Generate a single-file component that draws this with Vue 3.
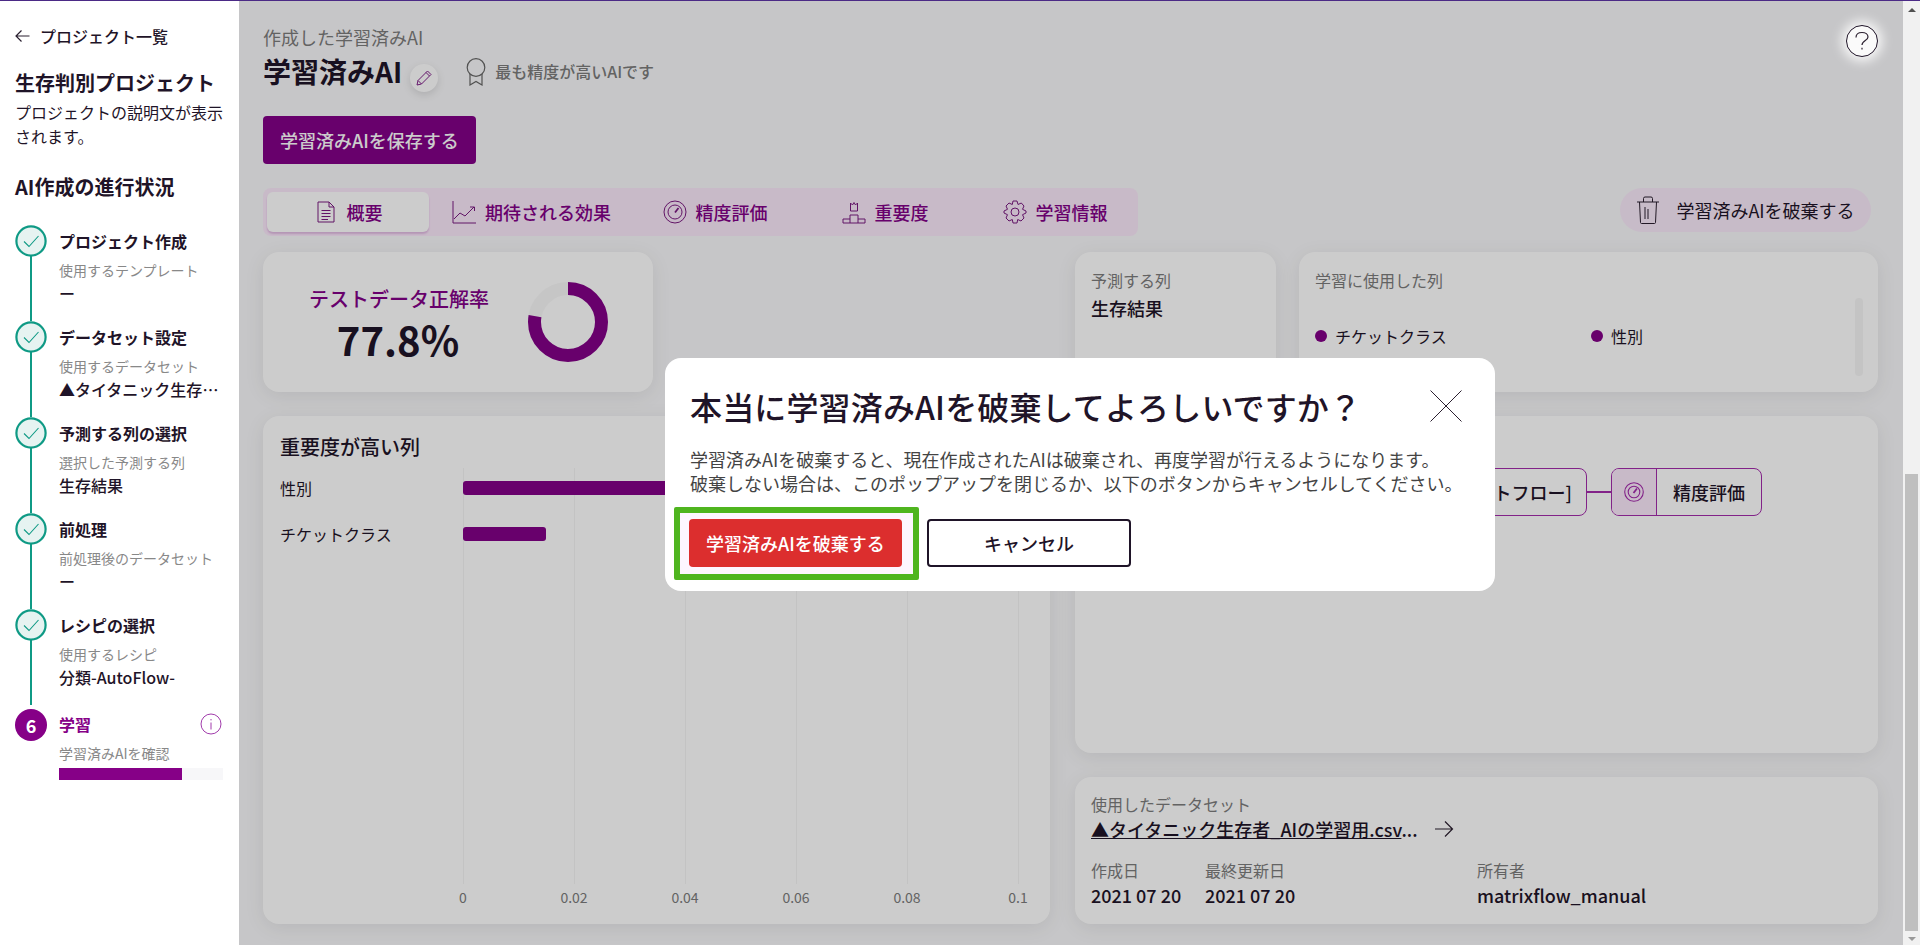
<template>
  <div class="page">
    <div class="top-line"></div>
    <div class="shell">
      <!-- Sidebar -->
      <aside class="sidebar">
        <div class="back">
          <svg class="back-icon" width="15" height="14" viewBox="0 0 15 14" fill="none" stroke="#2a2030" stroke-width="1.2">
            <path d="M14.500 7H1M6.500 1.500 1 7 6.500 12.500" />
          </svg>
          <span>プロジェクト一覧</span>
        </div>
        <h1 class="project-name">生存判別プロジェクト</h1>
        <p class="project-desc">プロジェクトの説明文が表示されます。</p>
        <h2 class="progress-title">AI作成の進行状況</h2>

        <ol class="steps">
          <li v-for="step in steps" :key="step.title" class="step">
            <div class="step-mark">
              <svg width="32" height="32" viewBox="0 0 32 32" fill="none">
                <circle cx="16" cy="16" r="14.6" fill="#e6f3f1" stroke="#0f9a85" stroke-width="2.2" />
                <path d="M9 16.5 14 21.5 23.5 11" stroke="#0f9a85" stroke-width="1.1" />
              </svg>
              <i class="step-line"></i>
            </div>
            <div class="step-body">
              <div class="step-title">{{ step.title }}</div>
              <div class="step-sub">{{ step.sub }}</div>
              <div class="step-value">{{ step.value }}</div>
            </div>
          </li>
          <li class="step step-current">
            <div class="step-mark"><span class="step-num">6</span></div>
            <div class="step-body">
              <div class="current-head">
                <div class="step-title current-title">学習</div>
                <svg width="22" height="22" viewBox="0 0 22 22" fill="none" stroke="#a13bab" stroke-width="1">
                  <circle cx="11" cy="11" r="10" />
                  <path d="M11 9.5V16.5M11 6v1.4" />
                </svg>
              </div>
              <div class="step-sub current-sub">学習済みAIを確認</div>
              <div class="learn-track"><div class="learn-bar" :style="{ width: '75%' }"></div></div>
            </div>
          </li>
        </ol>
      </aside>

      <!-- Main -->
      <main class="main">
        <div class="head-label">作成した学習済みAI</div>
        <div class="head-row">
          <span class="head-title">学習済みAI</span>
          <span class="edit-btn">
            <svg width="18" height="18" viewBox="0 0 18 18" fill="none" stroke="#82208a" stroke-width="1">
              <path d="M2 16 3 11.500 12.500 2 16 5.500 6.500 15ZM3 11.500 6.500 15M11 3.500 14.500 7" />
            </svg>
          </span>
          <svg class="award" width="20" height="28" viewBox="0 0 20 28" fill="none" stroke="#666" stroke-width="1.2">
            <circle cx="10" cy="9.500" r="8.800" />
            <path d="M4 16V27L10 23.500 16 27V16" />
          </svg>
          <span class="head-note">最も精度が高いAIです</span>
        </div>
        <button class="save-btn">学習済みAIを保存する</button>

        <div class="toolbar">
          <div class="tabs">
            <div v-for="tab in tabs" :key="tab.label" class="tab" :class="{ active: tab.active }">
              <svg width="24" height="24" viewBox="0 0 24 24" fill="none" stroke="#7a1a80" stroke-width="1" v-html="tab.icon"></svg>
              <span>{{ tab.label }}</span>
            </div>
          </div>
          <div class="discard-pill">
            <svg width="24" height="28" viewBox="0 0 24 28" fill="none" stroke="#2b2030" stroke-width="1">
              <path d="M1 6H23M3.500 6 4.500 26.500Q4.600 27.500 5.500 27.500H18.500Q19.400 27.500 19.500 26.500L20.500 6M7.500 6V2.500Q7.500 1 9 1H15Q16.500 1 16.500 2.500V6M9 11V23M12 13V23" />
            </svg>
            <span>学習済みAIを破棄する</span>
          </div>
        </div>

        <div class="content">
          <!-- left column -->
          <div class="col-left">
            <section class="card score-card">
              <div class="score-text">
                <div class="score-label">テストデータ正解率</div>
                <div class="score-value">77.8%</div>
              </div>
              <svg width="80" height="80" viewBox="0 0 80 80" fill="none">
                <circle cx="40" cy="40" r="33.500" stroke="#f8f8f8" stroke-width="13" />
                <circle cx="40" cy="40" r="33.500" stroke="#820087" stroke-width="13" pathLength="100" stroke-dasharray="77.8 22.200" transform="rotate(-90 40 40)" />
              </svg>
            </section>
            <section class="card chart-card">
              <h3 class="chart-title">重要度が高い列</h3>
              <div class="chart">
                <div class="chart-labels">
                  <div v-for="row in importance" :key="row.name" class="chart-label">{{ row.name }}</div>
                </div>
                <div class="plot">
                  <i v-for="(t, i) in ticks" :key="t" class="grid-line" :style="{ left: i * 20 + '%' }"></i>
                  <span v-for="(t, i) in ticks" :key="'l' + t" class="tick" :style="{ left: i * 20 + '%' }">{{ t }}</span>
                  <div class="bars">
                    <div v-for="row in importance" :key="row.name" class="bar" :style="{ width: row.value * 1000 + '%' }"></div>
                  </div>
                </div>
              </div>
            </section>
          </div>

          <!-- right column -->
          <div class="col-right">
            <div class="info-row">
              <section class="card target-card">
                <div class="muted">予測する列</div>
                <div class="strong target-val">生存結果</div>
              </section>
              <section class="card used-card">
                <div class="muted">学習に使用した列</div>
                <div class="used-list">
                  <span class="used-item"><i class="dot"></i>チケットクラス</span>
                  <span class="used-item"><i class="dot"></i>性別</span>
                </div>
                <i class="card-scroll"></i>
              </section>
            </div>
            <section class="card flow-card">
              <div class="flow">
                <div class="flow-box flow-recipe">分類-AutoFlow-[オートフロー]</div>
                <i class="flow-link"></i>
                <div class="flow-box flow-eval">
                  <span class="flow-icon">
                    <svg width="20" height="20" viewBox="0 0 20 20" fill="none" stroke="#a32bab" stroke-width="1.100">
                      <circle cx="10" cy="10" r="9.300" />
                      <circle cx="10" cy="10" r="5.800" />
                      <path d="M9.500 11 13 6.500" stroke-width="1.800" />
                    </svg>
                  </span>
                  <span class="flow-text">精度評価</span>
                </div>
              </div>
            </section>
            <section class="card dataset-card">
              <div class="muted">使用したデータセット</div>
              <div class="dataset-link">
                <span><span class="link-text">▲タイタニック生存者_AIの学習用.csv</span>...</span>
                <svg width="20" height="18" viewBox="0 0 20 18" fill="none" stroke="#2b2030" stroke-width="1.200">
                  <path d="M1 9H18M11 1.500 18.500 9 11 16.500" />
                </svg>
              </div>
              <div class="meta">
                <div class="meta-col meta-date">
                  <div class="muted">作成日</div>
                  <div class="strong">2021 07 20</div>
                </div>
                <div class="meta-col meta-update">
                  <div class="muted">最終更新日</div>
                  <div class="strong">2021 07 20</div>
                </div>
                <div class="meta-col">
                  <div class="muted">所有者</div>
                  <div class="strong">matrixflow_manual</div>
                </div>
              </div>
            </section>
          </div>
        </div>

        <!-- Dim layer + dialog -->
        <div class="overlay">
          <div class="dialog" role="dialog">
            <div class="dialog-head">
              <h2 class="dialog-title">本当に学習済みAIを破棄してよろしいですか？</h2>
              <svg class="dialog-close" width="34" height="34" viewBox="0 0 34 34" fill="none" stroke="#2b2030" stroke-width="1">
                <path d="M1.500 1.500 32.500 32.500M32.500 1.500 1.500 32.500" />
              </svg>
            </div>
            <p class="dialog-text">学習済みAIを破棄すると、現在作成されたAIは破棄され、再度学習が行えるようになります。<br />破棄しない場合は、このポップアップを閉じるか、以下のボタンからキャンセルしてください。</p>
            <div class="dialog-actions">
              <div class="danger-wrap">
                <i class="annotation"></i>
                <button class="danger-btn">学習済みAIを破棄する</button>
              </div>
              <button class="cancel-btn">キャンセル</button>
            </div>
          </div>
        </div>

        <div class="help-btn">
          <svg width="16" height="20" viewBox="0 0 16 20" fill="none" stroke="#2b2030" stroke-width="1.200">
            <path d="M2 6.500C2 3.300 4.500 1.500 8 1.500S14 3.500 14 6C14 9.500 8 9.500 8 14" />
            <path d="M8 16.800V18.500" />
          </svg>
        </div>
      </main>

      <!-- Window scrollbar -->
      <div class="scrollbar">
        <span class="arrow-up"></span>
        <div class="scroll-space"><div class="scroll-thumb"></div></div>
        <span class="arrow-down"></span>
      </div>
    </div>
  </div>
</template>

<script setup>
const steps = [
  { title: 'プロジェクト作成', sub: '使用するテンプレート', value: 'ー' },
  { title: 'データセット設定', sub: '使用するデータセット', value: '▲タイタニック生存者_AIの学習用.csv' },
  { title: '予測する列の選択', sub: '選択した予測する列', value: '生存結果' },
  { title: '前処理', sub: '前処理後のデータセット', value: 'ー' },
  { title: 'レシピの選択', sub: '使用するレシピ', value: '分類-AutoFlow-' }
]

const tabs = [
  {
    label: '概要',
    active: true,
    icon: '<path d="M4 2H15L20 7V22H4ZM15 2V7H20M7.500 10.500H16.500M7.500 13.500H16.500M7.500 16.500H16.500M7.500 19.500H14" />'
  },
  {
    label: '期待される効果',
    icon: '<path d="M1 1V23H24M2 19 8 13 13 16 22 7M18 7H22.500V11" />'
  },
  {
    label: '精度評価',
    icon: '<circle cx="12" cy="12" r="11" /><circle cx="12" cy="12" r="7" /><path d="M12 12.500 15.500 8" stroke-width="1.800" />'
  },
  {
    label: '重要度',
    icon: '<path d="M1 23V19H8V15H16V19H23V23ZM8 19V23M16 19V23M8.500 11V3L10.500 5 12 2.500 13.500 5 15.500 3V11Z" />'
  },
  {
    label: '学習情報',
    icon: '<circle cx="12" cy="12" r="4" /><path d="M10 1H14L15 4.500 18.300 3 21 6 19.500 9.300 23 11V13L19.500 14.700 21 18 18 21 14.700 19.500 14 23H10L9.300 19.500 6 21 3 18 4.500 14.700 1 13V11L4.500 9.300 3 6 6 3 9.300 4.500Z" stroke-linejoin="round" />'
  }
]

const importance = [
  { name: '性別', value: 0.0776 },
  { name: 'チケットクラス', value: 0.015 }
]

const ticks = ['0', '0.02', '0.04', '0.06', '0.08', '0.1']
</script>

<style scoped>
.page { width: 1920px; height: 945px; overflow: hidden; background: #fff; color: #1f1428; font-family: "Noto Sans CJK JP", "Noto Sans", sans-serif; }
.top-line { height: 1px; background: #4b2a86; }
.shell { display: flex; height: 944px; }

/* Sidebar */
.sidebar { width: 239px; flex-shrink: 0; padding: 23px 14px 0 15px; box-sizing: border-box; background: #fff; }
.back { display: flex; align-items: center; gap: 10px; font-size: 16px; line-height: 24px; height: 24px; font-weight: 500; }
.back-icon { flex-shrink: 0; }
.project-name { margin: 20px 0 0; font-size: 20px; line-height: 30px; font-weight: 700; white-space: nowrap; }
.project-desc { margin: 2px 0 0; font-size: 16px; line-height: 24px; }
.progress-title { margin: 24px 0 0; font-size: 20px; line-height: 30px; font-weight: 700; }

.steps { list-style: none; margin: 23px 2px 0 0; padding: 0; }
.step { display: flex; gap: 12px; height: 96px; }
.step-mark { width: 32px; flex-shrink: 0; display: flex; flex-direction: column; align-items: center; }
.step-mark svg { flex-shrink: 0; display: block; }
.step-line { width: 2.500px; flex: 1; background: #0f9a85; margin-top: -1px; }
.step-body { flex: 1; min-width: 0; }
.step-title { font-size: 16px; line-height: 24px; margin-top: 4px; font-weight: 700; }
.step-sub { font-size: 14px; line-height: 20px; margin-top: 7px; color: #888; }
.step-value { font-size: 16px; line-height: 24px; margin-top: 1px; font-weight: 500; white-space: nowrap; overflow: hidden; text-overflow: ellipsis; }

.step-current { margin-top: 4px; }
.step-num { width: 32px; height: 32px; border-radius: 50%; background: #860087; color: #fff; font-size: 18px; font-weight: 700; display: flex; align-items: center; justify-content: center; }
.current-head { display: flex; align-items: center; justify-content: space-between; margin-top: 3px; padding-right: 1px; }
.current-title { color: #860087; margin-top: 0; }
.current-sub { margin-top: 7px; }
.learn-track { height: 12px; margin-top: 5px; background: #f7f7f9; }
.learn-bar { height: 100%; background: #860087; }

/* Main */
.main { position: relative; flex: 1; min-width: 0; padding: 23px 25px 0 24px; box-sizing: border-box; background: #f8f8fa; }
.head-label { font-size: 18px; line-height: 26px; color: #7c7c7c; }
.head-row { display: flex; align-items: center; height: 42px; }
.head-title { font-size: 28px; font-weight: 700; line-height: 42px; }
.edit-btn { width: 28px; height: 28px; margin: 13px 0 0 8px; border-radius: 50%; background: #fff; box-shadow: 0 3px 8px rgba(0, 0, 0, 0.12); display: flex; align-items: center; justify-content: center; }
.award { margin: 2px 0 0 28px; }
.head-note { margin-left: 9px; font-size: 16px; color: #7c7c7c; font-weight: 500; }
.save-btn { display: block; width: 213px; height: 48px; margin-top: 24px; padding: 0; border: 0; border-radius: 4px; background: #820087; color: #fff; font-family: inherit; font-size: 18px; font-weight: 500; }

.toolbar { display: flex; align-items: flex-start; justify-content: space-between; margin-top: 24px; padding-right: 7px; }
.tabs { display: flex; gap: 8px; height: 48px; padding: 4px 2px 4px 4px; box-sizing: border-box; border-radius: 8px; background: #fbe9fb; }
.tab { min-width: 162px; padding: 0 15px; box-sizing: border-box; display: flex; align-items: center; justify-content: center; gap: 9px; border-radius: 6px; color: #820087; font-size: 18px; font-weight: 500; }
.tab.active { background: #fff; box-shadow: 0 2px 2px rgba(130, 0, 135, 0.2); }
.discard-pill { width: 251px; height: 44px; border-radius: 22px; display: flex; align-items: center; justify-content: center; gap: 16px; background: #f9eafa; font-size: 18px; }

.content { display: flex; gap: 25px; margin-top: 16px; }
.col-left { width: 787px; flex-shrink: 0; display: flex; flex-direction: column; gap: 24px; }
.col-right { flex: 1; min-width: 0; display: flex; flex-direction: column; gap: 24px; }
.card { position: relative; background: #fff; border-radius: 16px; box-shadow: 0 4px 20px rgba(0, 0, 0, 0.08); box-sizing: border-box; }

.score-card { width: 390px; height: 140px; display: flex; align-items: center; padding-left: 46px; gap: 41px; }
.score-text { text-align: center; width: 178px; flex-shrink: 0; margin-top: 4px; white-space: nowrap; }
.score-label { color: #820087; font-size: 20px; line-height: 30px; font-weight: 500; }
.score-value { font-size: 40px; line-height: 50px; font-weight: 700; }

.chart-card { height: 508px; padding: 16px 17px; }
.chart-title { margin: 0; font-size: 20px; line-height: 30px; font-weight: 500; }
.chart { display: flex; margin-top: 6px; height: 416px; }
.chart-labels { width: 183px; flex-shrink: 0; padding-top: 8px; }
.chart-label { font-size: 16px; line-height: 24px; height: 46px; }
.plot { position: relative; width: 555px; height: 416px; }
.grid-line { position: absolute; top: 0; bottom: 0; width: 1px; background: #f4f4f4; }
.tick { position: absolute; top: 419px; transform: translateX(-50%); font-size: 14px; line-height: 20px; color: #7c7c7c; }
.bars { position: absolute; inset: 13px 0 0 0; }
.bar { height: 14px; margin-bottom: 32px; background: #820087; border-radius: 3px; }

.info-row { display: flex; gap: 23px; }
.target-card { width: 201px; height: 140px; padding: 16px; }
.used-card { flex: 1; height: 140px; padding: 16px 16px; }
.muted { color: #7c7c7c; font-size: 16px; line-height: 24px; }
.strong { font-size: 18px; line-height: 26px; font-weight: 500; }
.target-val { margin-top: 3px; }
.used-list { display: grid; grid-template-columns: 276px 1fr; margin-top: 32px; }
.used-item { display: flex; align-items: center; gap: 8px; font-size: 16px; line-height: 24px; }
.dot { width: 12px; height: 12px; border-radius: 50%; background: #820087; flex-shrink: 0; }
.card-scroll { position: absolute; right: 15px; top: 46px; width: 8px; height: 78px; border-radius: 4px; background: #f6f6f6; }

.flow-card { height: 337px; padding: 52px 0 0 0; }
.flow { display: flex; align-items: center; padding-left: 246px; }
.flow-box { height: 48px; box-sizing: border-box; border: 1.500px solid #a32bab; border-radius: 8px; display: flex; align-items: center; font-size: 18px; font-weight: 500; overflow: hidden; }
.flow-recipe { width: 266px; justify-content: flex-end; padding-right: 14px; white-space: nowrap; }
.flow-link { width: 24px; height: 1.500px; background: #a32bab; }
.flow-eval { width: 151px; }
.flow-icon { width: 44px; height: 100%; flex-shrink: 0; display: flex; align-items: center; justify-content: center; border-right: 1.500px solid #a32bab; background: #fbe9fb; }
.flow-text { flex: 1; text-align: center; }

.dataset-card { height: 147px; padding: 15px 16px; }
.dataset-link { display: flex; align-items: center; gap: 16px; font-size: 18px; line-height: 26px; font-weight: 500; }
.link-text { text-decoration: underline; }
.meta { display: flex; margin-top: 16px; }
.meta-col { flex-shrink: 0; }
.meta-date { width: 114px; }
.meta-update { width: 272px; }

/* Overlay */
.overlay { position: absolute; inset: 0; padding-left: 18px; display: flex; align-items: center; justify-content: center; background: rgba(0, 0, 0, 0.2); z-index: 2; }
.dialog { width: 830px; height: 233px; box-sizing: border-box; padding: 24px 25px 0 25px; margin-top: 3px; background: #fff; border-radius: 16px; }
.dialog-head { display: flex; align-items: center; justify-content: space-between; height: 48px; }
.dialog-title { margin: 0; font-size: 32px; line-height: 48px; font-weight: 500; letter-spacing: 0.15px; white-space: nowrap; }
.dialog-close { margin-right: 7px; }
.dialog-text { margin: 17px 0 0; font-size: 18px; line-height: 24px; white-space: nowrap; color: #444; }
.dialog-actions { display: flex; gap: 25px; margin-top: 24px; }
.danger-wrap { position: relative; margin-left: -1px; }
.annotation { position: absolute; inset: -12px -17px -13px -15px; border: 6px solid #4fb51f; border-radius: 2px; background: #fdf6ff; box-sizing: border-box; }
.danger-btn { position: relative; display: block; width: 213px; height: 48px; border: 0; border-radius: 4px; background: #dc2e2e; color: #fff; font-family: inherit; font-size: 18px; font-weight: 500; padding: 0; }
.cancel-btn { width: 204px; height: 48px; border: 2px solid #1f1428; border-radius: 4px; background: #fff; color: #1f1428; font-family: inherit; font-size: 18px; font-weight: 500; padding: 0; }

.help-btn { position: absolute; top: 24px; right: 25px; z-index: 3; width: 32px; height: 32px; box-sizing: border-box; border: 1.500px solid #1f1428; border-radius: 50%; background: #fafafa; box-shadow: 0 0 12px 4px rgba(255, 255, 255, 0.9); display: flex; align-items: center; justify-content: center; }

/* Scrollbar */
.scrollbar { width: 17px; flex-shrink: 0; background: #f1f1f1; display: flex; flex-direction: column; align-items: center; }
.arrow-up { width: 0; height: 0; margin: 7px 0 6px; border: 4px solid transparent; border-top: 0; border-bottom: 4px solid #505050; }
.arrow-down { width: 0; height: 0; margin: 6px 0 4px; border: 4px solid transparent; border-bottom: 0; border-top: 4px solid #9a9a9a; }
.scroll-space { flex: 1; width: 100%; display: flex; flex-direction: column; align-items: center; justify-content: flex-end; }
.scroll-thumb { width: 13px; height: 457px; background: #bfbfbf; }
</style>

<style>
html, body { margin: 0; padding: 0; }
</style>
